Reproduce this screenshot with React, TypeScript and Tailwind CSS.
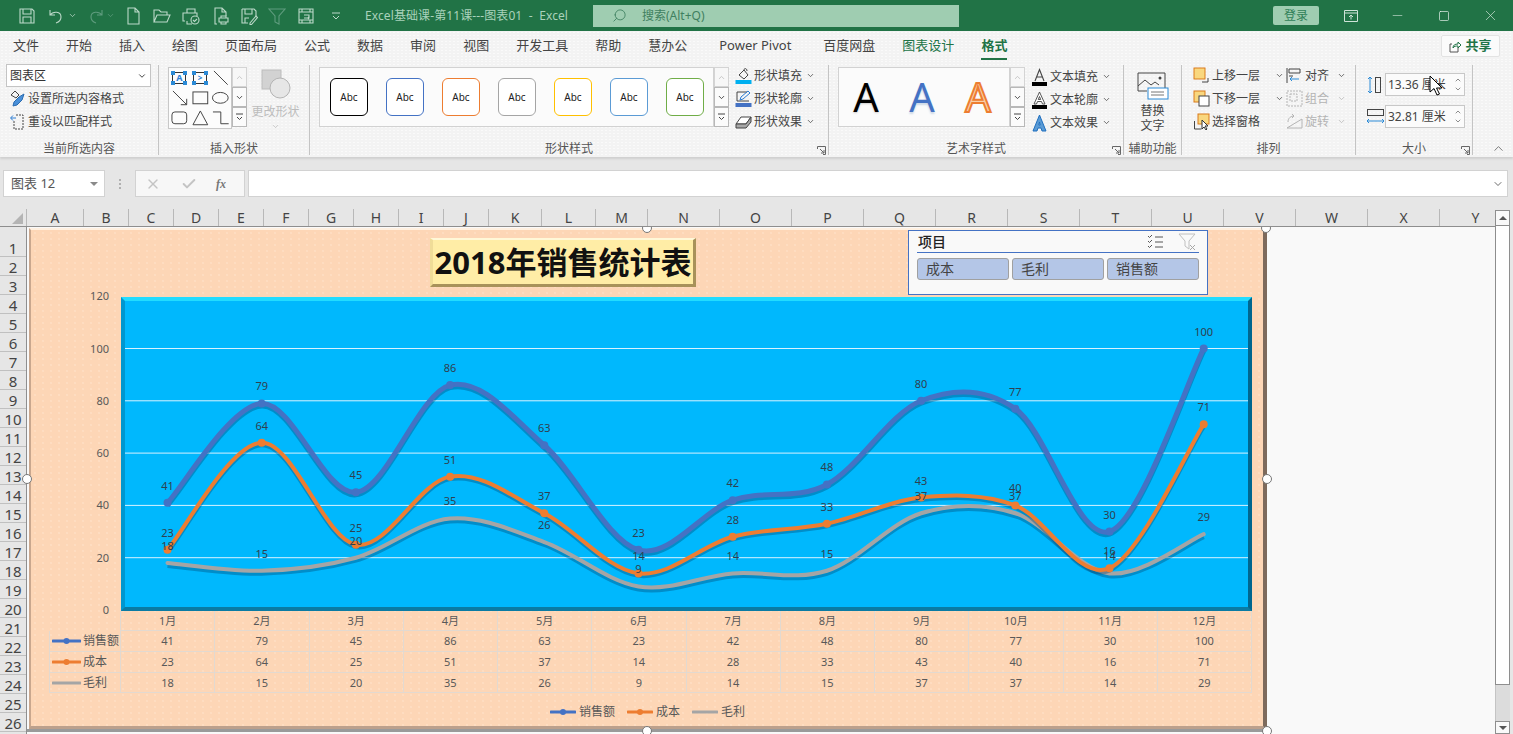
import { ChevronDown, ChevronUp, Search, Minus, Square, X, Check } from 'lucide-react';
import type { ReactNode } from 'react';

const FONT = '"Noto Sans", "Noto Sans CJK SC", sans-serif';

const months = ['1月', '2月', '3月', '4月', '5月', '6月', '7月', '8月', '9月', '10月', '11月', '12月'];
const series = [
  { name: '销售额', color: '#4472c4', values: [41, 79, 45, 86, 63, 23, 42, 48, 80, 77, 30, 100] },
  { name: '成本', color: '#ed7d31', values: [23, 64, 25, 51, 37, 14, 28, 33, 43, 40, 16, 71] },
  { name: '毛利', color: '#a5a5a5', values: [18, 15, 20, 35, 26, 9, 14, 15, 37, 37, 14, 29] },
];
const columns: [string, number][] = [
  ['A', 57], ['B', 45], ['C', 45], ['D', 45], ['E', 45], ['F', 45], ['G', 45], ['H', 45], ['I', 45], ['J', 45],
  ['K', 53], ['L', 54], ['M', 52], ['N', 72], ['O', 72], ['P', 72], ['Q', 72], ['R', 72], ['S', 72], ['T', 72],
  ['U', 72], ['V', 72], ['W', 72], ['X', 72], ['Y', 72],
];
const tabs = ['文件', '开始', '插入', '绘图', '页面布局', '公式', '数据', '审阅', '视图', '开发工具', '帮助', '慧办公', 'Power Pivot', '百度网盘', '图表设计', '格式'];
const abcColors = ['border-[#000000]', 'border-[#4472c4]', 'border-[#ed7d31]', 'border-[#a5a5a5]', 'border-[#ffc000]', 'border-[#5b9bd5]', 'border-[#70ad47]'];

// chart maths, in page coordinates
const xAt = (i: number) => 167.5 + i * 94.2;
const yAt = (v: number) => 610 - v * 2.615;

function smoothPath(values: number[]) {
  const pts = values.map((v, i) => [xAt(i), yAt(v)]);
  let d = `M${pts[0][0]} ${pts[0][1]}`;
  for (let i = 0; i < pts.length - 1; i++) {
    const p0 = pts[Math.max(i - 1, 0)];
    const p1 = pts[i];
    const p2 = pts[i + 1];
    const p3 = pts[Math.min(i + 2, pts.length - 1)];
    const c1x = p1[0] + (p2[0] - p0[0]) / 6;
    const c1y = p1[1] + (p2[1] - p0[1]) / 6;
    const c2x = p2[0] - (p3[0] - p1[0]) / 6;
    const c2y = p2[1] - (p3[1] - p1[1]) / 6;
    d += ` C${c1x} ${c1y} ${c2x} ${c2y} ${p2[0]} ${p2[1]}`;
  }
  return d;
}

function Qat({ children, w = 18, dim = false }: { children: ReactNode; w?: number; dim?: boolean }) {
  return (
    <svg width={w} height={18} viewBox="0 0 18 18" fill="none" stroke={dim ? '#5f9c7e' : '#bcd9c9'} strokeWidth="1.1">
      {children}
    </svg>
  );
}

function TitleBar() {
  return (
    <div className="h-[31px] bg-[#217346] flex items-center shrink-0 text-[12px]">
      <div className="w-[18px]" />
      <div className="flex items-center w-[347px]">
        <Qat><path d="M2 2h12l2 2v12H2zM5 2v5h8V2M5 16v-6h8v6" /></Qat>
        <div className="w-[11px]" />
        <Qat><path d="M3 3v5h5M3 8c3-4 11-4 11 2 0 3-2 5-5 6" /></Qat>
        <ChevronDown size={9} className="text-[#bcd9c9] ml-[3px]" />
        <div className="w-[10px]" />
        <Qat dim><path d="M15 3v5h-5M15 8c-3-4-11-4-11 2 0 3 2 5 5 6" /></Qat>
        <ChevronDown size={9} className="text-[#5f9c7e] ml-[1px]" />
        <div className="w-[9px]" />
        <Qat><path d="M4 1h7l4 4v12H4zM11 1v4h4" /></Qat>
        <div className="w-[11px]" />
        <Qat><path d="M1 15V3h5l2 2h6v3M1 15l3-7h13l-3 7z" /></Qat>
        <div className="w-[11px]" />
        <Qat><path d="M5 6V2h8v4M3 14H1V6h14v3M5 14v3h5" /><circle cx="13" cy="13" r="4" /><path d="M11 13l1.5 1.5 2.5-2.5" /></Qat>
        <div className="w-[12px]" />
        <Qat><path d="M5 17H3V1h7l4 4v4M10 1v4h4" /><path d="M7 11h9v4H7zM9 11V9h5v2M9 15v2h5v-2" /></Qat>
        <div className="w-[10px]" />
        <Qat><path d="M2 2h12l2 2v5M5 2v5h7V2M2 2v14h6M5 16v-5h4" /><path d="M10 16l6-7 1.5 1.5-6 7H10z" /></Qat>
        <div className="w-[10px]" />
        <Qat dim><path d="M1 2h16l-6 7v8l-4-2V9z" /></Qat>
        <div className="w-[11px]" />
        <Qat><path d="M2 2h14v14H2zM2 5h14M2 13h14M5 2v3M13 2v3M5 13v3M13 13v3M7 8h5v3M7 11h5M11 10l1 1-1 1" /></Qat>
        <div className="w-[16px]" />
        <svg width="10" height="8" viewBox="0 0 10 8" fill="none" stroke="#bcd9c9"><path d="M1 1h8M2 4l3 3 3-3" /></svg>
      </div>
      <div className="w-[228px] text-[#a9d2bb] whitespace-pre tracking-[0.1px]">Excel基础课-第11课---图表01  -  Excel</div>
      <div className="w-[366px] h-[22px] bg-[#9fcdb1] flex items-center text-[#3f8060]">
        <Search size={15} className="ml-[19px] -scale-x-100" strokeWidth={1.4} />
        <span className="ml-[15px]">搜索(Alt+Q)</span>
      </div>
      <div className="ml-[314px] w-[46px] h-[19px] bg-[#9fcdb1] rounded-[2px] flex items-center justify-center text-[#2f7f58]">登录</div>
      <div className="ml-[23px] w-[18px] flex justify-center">
        <svg width="14" height="12" viewBox="0 0 14 12" fill="none" stroke="#cfe3d8"><path d="M.5.5h13v11H.5zM.5 3h13M7 9.500V5M5 7l2-2 2 2" /></svg>
      </div>
      <Minus size={15} className="ml-[30px] text-[#cfe3d8]" strokeWidth={1} />
      <Square size={12} className="ml-[33px] text-[#e4efe9]" strokeWidth={1.4} />
      <X size={17} className="ml-[32px] text-[#cfe3d8]" strokeWidth={1} />
    </div>
  );
}

function TabRow() {
  return (
    <div className="h-[29px] bg-[#f3f3f3] bg-[radial-gradient(#fafafa_0.7px,transparent_0.8px)] bg-[length:4px_3px] flex items-start shrink-0 relative text-[13px] text-[#444444] pl-[13px] pt-[5px] gap-[27px]">
      {tabs.map((t) => {
        const active = t === '格式';
        return (
          <div key={t} className={`leading-[18px] h-[24px] whitespace-nowrap ${active ? 'font-bold text-[#217346] border-b-[2px] border-[#217346]' : t === '图表设计' ? 'text-[#217346]' : t === 'Power Pivot' ? 'px-[5px]' : ''}`}>
            {t}
          </div>
        );
      })}
      <div className="absolute left-[1441px] top-[4px] w-[59px] h-[22px] bg-[#fbfbfb] border border-[#e3e3e3] rounded-[2px] flex items-center justify-center gap-[4px] text-[#217346] font-bold">
        <svg width="12" height="13" viewBox="0 0 12 13" fill="none" stroke="#555555"><path d="M9 7.500V12H1V4h2" /><path d="M4 8c0-3 2-4 5-4V2l3 3-3 3V6C7 6 5 6 4 8z" stroke="#217346" /></svg>
        共享
      </div>
    </div>
  );
}

function Group({ w, label, launcher, children }: { w: number; label: string; launcher?: boolean; children: ReactNode }) {
  return (
    <div className="h-[90px] mt-[5px] border-r border-[#c4c4c4] flex flex-col shrink-0 relative" style={{ width: w }}>
      <div className="h-[76px] flex">{children}</div>
      <div className="h-[14px] leading-[15px] text-center text-[12px] text-[#555555]">{label}</div>
      {launcher && (
        <svg width="9" height="9" viewBox="0 0 9 9" fill="none" stroke="#666666" className="absolute right-[2px] bottom-0">
          <path d="M.5 3V.5h8v8H6M3 3l4 4M7 4v3H4" />
        </svg>
      )}
    </div>
  );
}

function ScrollButtons({ h = 20 }: { h?: number }) {
  return (
    <div className="w-[15px] flex flex-col">
      <div className="border border-[#d4d4d4] bg-[#f7f7f7] flex items-center justify-center" style={{ height: h }}>
        <ChevronUp size={9} className="text-[#c4c4c4]" strokeWidth={2.5} />
      </div>
      <div className="border border-[#b8b8b8] bg-[#fbfbfb] flex items-center justify-center" style={{ height: h }}>
        <ChevronDown size={9} className="text-[#444444]" strokeWidth={2.5} />
      </div>
      <div className="border border-[#b8b8b8] bg-[#fbfbfb] flex items-center justify-center" style={{ height: h }}>
        <svg width="9" height="8" viewBox="0 0 9 8" fill="none" stroke="#444444"><path d="M1 1h7M2 4l2.500 2.500L7 4" /></svg>
      </div>
    </div>
  );
}

function Cmd({ icon, label, chevron = true, gray = false, w }: { icon: ReactNode; label: string; chevron?: boolean; gray?: boolean; w: number }) {
  return (
    <div className={`h-[23px] flex items-center text-[12px] ${gray ? 'text-[#b4b4b4]' : 'text-[#444444]'}`} style={{ width: w }}>
      <span className="w-[19px] h-[18px] flex items-center shrink-0">{icon}</span>
      <span className="whitespace-nowrap">{label}</span>
      {chevron && <ChevronDown size={9} strokeWidth={2} className={`ml-auto ${gray ? 'text-[#b4b4b4]' : 'text-[#444444]'}`} />}
    </div>
  );
}

function Handle({ x }: { x: string }) {
  return <span className={`absolute w-[4px] h-[4px] bg-[#2b8ad6] ${x}`} />;
}

function ShapeThumbs() {
  const s = { fill: 'none', stroke: '#444444', strokeWidth: 1 };
  return (
    <div className="w-[64px] bg-[#fcfcfc] border border-[#c8c8c8] grid grid-cols-3 grid-rows-3">
      <div className="flex items-center justify-center">
        <div className="relative w-[14px] h-[12px] border border-[#333333] text-[9px] leading-[10px] font-bold text-center text-[#2b7cd3]">A
          <Handle x="-left-[2px] -top-[2px]" /><Handle x="-right-[2px] -top-[2px]" /><Handle x="-left-[2px] -bottom-[2px]" /><Handle x="-right-[2px] -bottom-[2px]" />
        </div>
      </div>
      <div className="flex items-center justify-center">
        <div className="relative w-[14px] h-[12px] border border-[#333333] text-[8px] leading-[10px] font-bold text-center text-[#2b7cd3]">&gt;
          <Handle x="-left-[2px] -top-[2px]" /><Handle x="-right-[2px] -top-[2px]" /><Handle x="-left-[2px] -bottom-[2px]" /><Handle x="-right-[2px] -bottom-[2px]" />
        </div>
      </div>
      <svg viewBox="0 0 21 20" {...s}><path d="M4 3l14 14" /></svg>
      <svg viewBox="0 0 21 20" {...s}><path d="M4 3l14 14M18 11v6h-6" /></svg>
      <svg viewBox="0 0 21 20" {...s}><rect x="3" y="4" width="15" height="12" /></svg>
      <svg viewBox="0 0 21 20" {...s}><ellipse cx="10.500" cy="10" rx="8" ry="5.500" /></svg>
      <svg viewBox="0 0 21 20" {...s}><rect x="3" y="4" width="15" height="12" rx="3" /></svg>
      <svg viewBox="0 0 21 20" {...s}><path d="M10.500 3L18 17H3z" /></svg>
      <svg viewBox="0 0 21 20" {...s}><path d="M3 4h8v12h8" /></svg>
    </div>
  );
}

// the three "text" commands: thin A, double outlined A, fat blue A
function TextA({ kind }: { kind: 'fill' | 'outline' | 'effect' }) {
  return (
    <svg width="17" height="18" viewBox="0 0 17 18" fill="none">
      {kind === 'fill' && <path d="M4 13L8.500 1.500 13 13M5.500 9h6" stroke="#444444" strokeWidth="1.1" />}
      {kind === 'outline' && (
        <path d="M8.500 1L3 13h2.500l1-2.500h4l1 2.500H14z M7.300 8.500L8.500 5.500 9.700 8.500z" fill="#ffffff" stroke="#444444" fillRule="evenodd" strokeWidth="0.9" />
      )}
      {kind === 'effect' && (
        <path d="M8.500 1L2 17h4l1-3h3l1 3h4z M7.800 11L8.500 8 9.200 11z" fill="#5b9bd5" stroke="#1f6fbf" fillRule="evenodd" strokeWidth="1" />
      )}
      {kind !== 'effect' && <rect x="1" y="14" width="15" height="4" fill="#000000" />}
    </svg>
  );
}

function Ribbon() {
  return (
    <div className="h-[97px] bg-[#f3f3f3] bg-[radial-gradient(#fafafa_0.7px,transparent_0.8px)] bg-[length:4px_3px] flex shrink-0 relative shadow-[0_2px_2px_#cfcfcf] z-10" style={{ fontFamily: FONT }}>
      <Group w={159} label="当前所选内容">
        <div className="pl-[6px] -mt-[1px]">
          <div className="w-[145px] h-[23px] bg-white border border-[#c4c4c4] flex items-center px-[3px] text-[12px] text-[#333333]">
            图表区
            <ChevronDown size={10} className="ml-auto text-[#333333]" strokeWidth={2.2} />
          </div>
          <div className="h-[23px] flex items-center pl-[3px] text-[12px] text-[#444444]">
            <svg width="17" height="17" viewBox="0 0 17 17" fill="none" stroke="#444444" className="mr-[2px]">
              <path d="M2 5l4-4 4 4-3 3z" /><path d="M10 7l5-3-2 6-5 5-4 1 1-4z" fill="#4a90d9" stroke="#2b6cb0" />
            </svg>
            设置所选内容格式
          </div>
          <div className="h-[23px] flex items-center pl-[3px] text-[12px] text-[#444444]">
            <svg width="17" height="17" viewBox="0 0 17 17" fill="none" stroke="#444444" className="mr-[2px]">
              <path d="M7 2h7v14H5V8" strokeDasharray="2 1" /><path d="M2 5h5M4 2.500L1.500 5 4 7.500" stroke="#2b7cd3" />
            </svg>
            重设以匹配样式
          </div>
        </div>
      </Group>

      <Group w={151} label="插入形状">
        <div className="pl-[9px] pt-[2px] flex">
          <div className="flex h-[62px]">
            <ShapeThumbs />
            <ScrollButtons h={20} />
          </div>
          <div className="w-[57px] flex flex-col items-center text-[12px] text-[#bcbcbc]">
            <svg width="30" height="34" viewBox="0 0 30 34" className="mt-[2px]">
              <rect x="1" y="1" width="19" height="19" fill="#d2d2d2" stroke="#bcbcbc" />
              <circle cx="19" cy="19" r="10" fill="#e6e6e6" stroke="#b4b4b4" />
            </svg>
            <span className="leading-[16px] mt-[1px] whitespace-nowrap">更改形状</span>
            <ChevronDown size={9} className="mt-[2px] text-[#bcbcbc]" />
          </div>
        </div>
      </Group>

      <Group w={519} label="形状样式" launcher>
        <div className="pl-[9px] pt-[2px] flex">
          <div className="w-[395px] h-[60px] bg-[#fbfbfb] border border-[#d2d2d2] flex items-center pl-[10px] gap-[18px]">
            {abcColors.map((c) => (
              <div key={c} className={`w-[38px] h-[38px] rounded-[6px] border-[1px] bg-white flex items-center justify-center text-[10px] text-[#222222] ${c}`}>Abc</div>
            ))}
          </div>
          <ScrollButtons h={20} />
          <div className="ml-[6px] -mt-[3px]">
            <Cmd w={80} label="形状填充" icon={
              <svg width="17" height="18" viewBox="0 0 17 18" fill="none" stroke="#444444"><path d="M4 8l5-5 4 5-4 4z" /><path d="M9 3c0-2 3-2 3 1" /><rect x="0.500" y="13" width="16" height="4" fill="#00b0f0" stroke="none" /></svg>
            } />
            <Cmd w={80} label="形状轮廓" icon={
              <svg width="17" height="18" viewBox="0 0 17 18" fill="none" stroke="#444444"><path d="M14 11H2V2h10" /><path d="M5 10l1-3 7-6 2 2-7 6z" stroke="#2b7cd3" /><rect x="0.500" y="13" width="16" height="4" fill="#4472c4" stroke="none" /></svg>
            } />
            <Cmd w={80} label="形状效果" icon={
              <svg width="17" height="16" viewBox="0 0 17 16" stroke="#444444"><path d="M1 10l5-7h10l-5 7z" fill="#ffffff" /><path d="M1 10v4h10l5-6V3l-5 7z" fill="#a8a8a8" /></svg>
            } />
          </div>
        </div>
      </Group>

      <Group w={295} label="艺术字样式" launcher>
        <div className="pl-[9px] pt-[2px] flex">
          <div className="w-[172px] h-[60px] bg-[#fbfbfb] border border-[#d2d2d2] flex items-center text-[40px] leading-none text-center">
            <span className="w-[56px] -ml-[1px] text-black [text-shadow:0_1px_2px_#cccccc]">A</span>
            <span className="w-[56px] text-[#4472c4] [text-shadow:0_2px_2px_#ccd8e6]">A</span>
            <span className="w-[56px] text-[#f9cfa8] [-webkit-text-stroke:2px_#ed7d31]">A</span>
          </div>
          <ScrollButtons h={20} />
          <div className="ml-[6px] -mt-[2px]">
            <Cmd w={80} label="文本填充" icon={<TextA kind="fill" />} />
            <Cmd w={80} label="文本轮廓" icon={<TextA kind="outline" />} />
            <Cmd w={80} label="文本效果" icon={<TextA kind="effect" />} />
          </div>
        </div>
      </Group>

      <Group w={58} label="辅助功能">
        <div className="w-full flex flex-col items-center text-[12px] leading-[15px] text-[#444444]">
          <svg width="32" height="28" viewBox="0 0 32 28" fill="none" className="mt-[7px]">
            <path d="M10 19H1V1h27v15" stroke="#444444" />
            <path d="M1 14l7-6 6 5 4-3 4 3" stroke="#444444" />
            <circle cx="23" cy="6" r="1.500" fill="#444444" />
            <rect x="11" y="16" width="20" height="11" fill="#ffffff" stroke="#2b8ad6" />
            <path d="M14 20h13M14 23h13" stroke="#777777" />
          </svg>
          <span className="mt-[3px]">替换</span>
          <span>文字</span>
        </div>
      </Group>

      <Group w={174} label="排列">
        <div className="pl-[11px] flex -mt-px">
          <div>
            <Cmd w={91} label="上移一层" icon={
              <svg width="17" height="17" viewBox="0 0 17 17" fill="none"><path d="M15 11V15H9" stroke="#444444" /><rect x="1" y="1" width="11" height="11" fill="#f9d77e" stroke="#d97a1a" /></svg>
            } />
            <Cmd w={91} label="下移一层" icon={
              <svg width="17" height="17" viewBox="0 0 17 17" fill="none"><rect x="1" y="1" width="11" height="11" fill="#f9d77e" stroke="#d97a1a" /><rect x="6" y="6" width="10" height="10" fill="#ffffff" stroke="#444444" /></svg>
            } />
            <Cmd w={91} chevron={false} label="选择窗格" icon={
              <svg width="17" height="17" viewBox="0 0 17 17" fill="none"><rect x="5" y="1" width="11" height="10" fill="#f9d77e" stroke="#d97a1a" /><path d="M1.500 8v8h7" stroke="#444444" /><path d="M9 7l0 9 2-2 2 3 1-1-2-3h3z" fill="#ffffff" stroke="#333333" /></svg>
            } />
          </div>
          <div className="ml-[2px]">
            <Cmd w={60} label="对齐" icon={
              <svg width="17" height="17" viewBox="0 0 17 17" fill="none" stroke="#444444"><path d="M1 1v15M3 2h11v4H3zM3 9h4" /><path d="M13 12H4M6 10l-2 2 2 2" stroke="#2b8ad6" /></svg>
            } />
            <Cmd w={60} gray label="组合" icon={
              <svg width="17" height="17" viewBox="0 0 17 17" fill="none" stroke="#b4b4b4" strokeDasharray="2 1"><path d="M1 1h15v15H1zM4 4h7v7H4z" /></svg>
            } />
            <Cmd w={60} gray label="旋转" icon={
              <svg width="17" height="17" viewBox="0 0 17 17" fill="none" stroke="#b4b4b4"><path d="M1 15L16 6v9z" /><path d="M2 9c0-4 3-6 6-6M6 1l2 2-2 2" /></svg>
            } />
          </div>
        </div>
      </Group>

      <Group w={117} label="大小" launcher>
        <div className="pl-[10px] pt-[8px] flex flex-col gap-[9px]">
          {[['13.36 厘米', 'v'], ['32.81 厘米', 'h']].map(([v, k]) => (
            <div key={k} className="flex items-center">
              {k === 'v' ? (
                <svg width="19" height="18" viewBox="0 0 19 18" fill="none"><path d="M4 1v16M2 3l2-2 2 2M2 15l2 2 2-2" stroke="#2b8ad6" /><rect x="9.500" y="1.500" width="5" height="15" stroke="#444444" /></svg>
              ) : (
                <svg width="19" height="18" viewBox="0 0 19 18" fill="none"><rect x="1.500" y="1.500" width="16" height="6" stroke="#444444" /><path d="M1 13h17M3 11l-2 2 2 2M16 11l2 2-2 2" stroke="#2b8ad6" /></svg>
              )}
              <div className="w-[80px] h-[23px] bg-[#fbfbfb] border border-[#c8c8c8] flex items-center pl-[2px] text-[12px] text-[#444444] whitespace-nowrap">
                {v}
                <div className="ml-auto mr-[2px] flex flex-col text-[#555555]">
                  <ChevronUp size={8} strokeWidth={2} />
                  <ChevronDown size={8} strokeWidth={2} className="mt-[1px]" />
                </div>
              </div>
            </div>
          ))}
        </div>
      </Group>

      <div className="flex-1 flex items-end justify-end pr-[7px] pb-[1px]">
        <ChevronUp size={15} className="text-[#555555]" strokeWidth={1.2} />
      </div>
    </div>
  );
}

function FormulaBar() {
  return (
    <div className="h-[52px] shrink-0 bg-[#e6e6e6] flex items-start pt-[13px] pl-[3px] pr-[5px]">
      <div className="w-[102px] h-[27px] bg-white border border-[#d2d2d2] flex items-center pl-[7px] text-[13px] text-[#555555]">
        图表 12
        <span className="ml-auto mr-[6px] w-0 h-0 border-l-[4px] border-r-[4px] border-t-[4px] border-l-transparent border-r-transparent border-t-[#8a8a8a]" />
      </div>
      <div className="w-[30px] h-[27px] flex items-center justify-center">
        <span className="flex flex-col gap-[2px]">
          <i className="block w-[2px] h-[2px] bg-[#b0b0b0]" />
          <i className="block w-[2px] h-[2px] bg-[#b0b0b0]" />
          <i className="block w-[2px] h-[2px] bg-[#b0b0b0]" />
        </span>
      </div>
      <div className="w-[110px] h-[27px] bg-[#f7f7f7] border border-[#d2d2d2] flex items-center pl-[9px]">
        <X size={16} className="text-[#c4c4c4]" strokeWidth={2} />
        <Check size={16} className="ml-[20px] text-[#c4c4c4]" strokeWidth={3} />
        <span className="ml-[19px] text-[12px] italic font-bold text-[#777777]" style={{ fontFamily: '"Liberation Serif", serif' }}>fx</span>
      </div>
      <div className="ml-[3px] flex-1 h-[27px] bg-white border border-[#d2d2d2] flex items-center justify-end pr-[3px]">
        <ChevronDown size={12} className="text-[#444444]" strokeWidth={1.6} />
      </div>
    </div>
  );
}

function ColumnHeader() {
  return (
    <div className="h-[18px] flex bg-[#e6e6e6] overflow-hidden shrink-0 border-b border-[#8e8e8e]">
      <div className="w-[27px] shrink-0 border-r border-[#b8b8b8] flex items-end justify-end pr-[3px] pb-[2px]">
        <span className="w-0 h-0 border-b-[11px] border-l-[11px] border-b-[#b4b4b4] border-l-transparent" />
      </div>
      {columns.map(([c, w]) => (
        <div key={c} className="shrink-0 border-r border-[#b8b8b8] text-center text-[14px] leading-[17px] text-[#444444]" style={{ width: w }}>{c}</div>
      ))}
    </div>
  );
}

function RowHeader() {
  return (
    <div className="w-[27px] shrink-0 flex flex-col bg-[#e6e6e6] border-r border-[#8e8e8e]">
      {Array.from({ length: 26 }, (_, i) => (
        <div key={i} className={`shrink-0 border-b border-[#c0c0c0] flex items-end justify-center text-[15px] leading-[15px] text-[#444444] ${i === 0 ? 'h-[30px]' : 'h-[19px]'}`}>
          {i + 1}
        </div>
      ))}
    </div>
  );
}

function Slicer() {
  return (
    <div className="absolute left-[877px] top-0 w-[300px] h-[65px] bg-[#f9f9f9] border border-[#4472c4] px-[8px] text-[14px]">
      <div className="h-[22px] flex items-center border-b border-[#4472c4] font-medium text-[#222222] pl-px">
        项目
        <svg width="17" height="15" viewBox="0 0 17 15" fill="none" stroke="#555555" className="ml-auto mr-[14px]">
          <path d="M1 2l1.500 1.500L5 1M1 7l1.500 1.500L5 6M1 12l1.500 1.500L5 11M8 3h8M8 8h8M8 13h8" />
        </svg>
        <svg width="18" height="18" viewBox="0 0 18 18" fill="none" stroke="#c0c0c0" className="mr-[3px]">
          <path d="M1 1h16l-6 7v8l-4-3V8z" /><path d="M12 12l5 5M17 12l-5 5" stroke="#a8a8a8" />
        </svg>
      </div>
      <div className="flex gap-[3px] mt-[5px]">
        {['成本', '毛利', '销售额'].map((t) => (
          <div key={t} className="flex-1 h-[22px] bg-[#b4c6e7] border border-[#a0a0a0] rounded-[3px] pl-[8px] leading-[19px] text-[#444444]">{t}</div>
        ))}
      </div>
    </div>
  );
}

function DataTable() {
  return (
    <div className="absolute left-[18px] top-[381px] w-[1203px] grid grid-cols-[72px_repeat(12,1fr)] grid-rows-[20px_21px_21px_20px] text-[11px] text-[#595959] leading-[20px] text-center">
      <div className="border-r border-[#e2d9d0]" />
      {months.map((m) => <div key={m} className="border-r border-b border-[#e2d9d0]">{m}</div>)}
      {series.map((s) => (
        <div key={s.name} className="contents">
          <div className="border-l border-r border-b border-t-0 border-[#e2d9d0] flex items-center pl-[2px] text-[12px]">
            <svg width="29" height="8" viewBox="0 0 29 8" className="mr-[2px] shrink-0">
              <line x1="1" y1="4" x2="28" y2="4" stroke={s.color} strokeWidth="3" strokeLinecap="round" />
              {s.name !== '毛利' && <circle cx="14.500" cy="4" r="3" fill={s.color} />}
            </svg>
            <span className="whitespace-nowrap">{s.name}</span>
          </div>
          {s.values.map((v, i) => <div key={i} className="border-r border-b border-[#e2d9d0]">{v}</div>)}
        </div>
      ))}
    </div>
  );
}

function Legend() {
  return (
    <div className="absolute left-[519px] top-[474px] flex gap-[12px] text-[12px] leading-[16px] text-[#595959]">
      {series.map((s) => (
        <div key={s.name} className="flex items-center gap-[3px]">
          <svg width="26" height="8" viewBox="0 0 26 8">
            <line x1="1" y1="4" x2="25" y2="4" stroke={s.color} strokeWidth="3" strokeLinecap="round" />
            {s.name !== '毛利' && <circle cx="13" cy="4" r="3" fill={s.color} />}
          </svg>
          {s.name}
        </div>
      ))}
    </div>
  );
}

function Chart() {
  const order = [series[2], series[1], series[0]];
  return (
    <div className="absolute left-[2px] top-[1px] w-[1238px] h-[501px] bg-[#fdd6b6] bg-[radial-gradient(#ffe8d6_0.7px,transparent_0.9px)] bg-[length:8px_6px] border-t-[2px] border-t-[#fff0e0] border-l-[2px] border-l-[#c9a78e] border-r-[4px] border-r-[#7d6a5c] border-b-[3px] border-b-[#bca08c]">
      {/* plot area */}
      <div className="absolute left-[90px] top-[67px] w-[1131px] h-[314px] bg-[#00b8fd] bg-[radial-gradient(#1cc2fd_0.6px,transparent_0.8px)] bg-[length:8px_6px] border-t-[4px] border-t-[#22dcff] border-l-[4px] border-l-[#0097cf] border-r-[4px] border-r-[#00668f] border-b-[4px] border-b-[#0a7ba3]" />
      <svg className="absolute left-0 top-0" width="1232" height="496" viewBox="31 230 1232 496" style={{ fontFamily: FONT }}>
        {[20, 40, 60, 80, 100].map((v) => (
          <line key={v} x1="125" x2="1248" y1={yAt(v)} y2={yAt(v)} stroke="#d8f2ff" strokeWidth="1" />
        ))}
        {[0, 20, 40, 60, 80, 100, 120].map((v) => (
          <text key={v} x="109" y={yAt(v) + 4} textAnchor="end" fontSize="11" fill="#595959">{v}</text>
        ))}
        {order.map((s) => (
          <g key={s.name}>
            <path d={smoothPath(s.values)} fill="none" stroke="#003c66" strokeOpacity="0.35" strokeWidth={s.name === '成本' ? 4 : 5} transform="translate(0 2.5)" />
            <path d={smoothPath(s.values)} fill="none" stroke={s.color} strokeWidth={s.name === '销售额' ? 5 : 4} strokeLinecap="round" />
            {s.name !== '毛利' && s.values.map((v, i) => (
              <circle key={i} cx={xAt(i)} cy={yAt(v)} r="4" fill={s.color} />
            ))}
          </g>
        ))}
        {series.map((s) => s.values.map((v, i) => (
          <text key={s.name + i} x={xAt(i)} y={yAt(v) - 13} textAnchor="middle" fontSize="11" fill="#2f4050">{v}</text>
        )))}
      </svg>
      {/* title */}
      <div className="absolute left-[399px] top-[8px] w-[266px] h-[49px] bg-[#ffeda6] border-t-[2px] border-t-[#fff8d8] border-l-[3px] border-l-[#f0dc98] border-r-[3px] border-r-[#a8925a] border-b-[3px] border-b-[#a8925a] flex items-center justify-center text-[31px] font-bold text-[#111111] whitespace-nowrap">
        2018年销售统计表
      </div>
      <Slicer />
      <DataTable />
      <Legend />
    </div>
  );
}

function SelectionHandle({ className }: { className: string }) {
  return <span className={`absolute w-[10px] h-[10px] rounded-full bg-white border border-[#777777] ${className}`} />;
}

function ScrollBar() {
  return (
    <div className="w-[18px] shrink-0 bg-[#e6e6e6] pt-px pr-[3px] flex flex-col">
      <div className="h-[16px] bg-[#f9f9f9] border border-[#8e8e8e] flex items-center justify-center shrink-0">
        <span className="w-0 h-0 border-l-[4px] border-r-[4px] border-b-[4px] border-l-transparent border-r-transparent border-b-[#555555]" />
      </div>
      <div className="h-[459px] bg-white border border-t-0 border-[#8e8e8e] shrink-0" />
      <div className="flex-1 bg-[#dcdcdc] border-l border-[#c4c4c4]" />
      <div className="h-[13px] bg-[#f9f9f9] border border-[#8e8e8e] flex items-center justify-center shrink-0">
        <span className="w-0 h-0 border-l-[4px] border-r-[4px] border-t-[4px] border-l-transparent border-r-transparent border-t-[#555555]" />
      </div>
    </div>
  );
}

export default function App() {
  return (
    <div className="w-[1513px] h-[734px] overflow-hidden flex flex-col bg-[#e6e6e6] relative" style={{ fontFamily: FONT }}>
      <TitleBar />
      <TabRow />
      <Ribbon />
      <FormulaBar />
      <div className="flex-1 flex min-h-0">
        <div className="flex-1 min-w-0 flex flex-col">
          <ColumnHeader />
          <div className="flex-1 flex min-h-0 overflow-hidden">
            <RowHeader />
            <div className="flex-1 relative bg-[#f9f9f9]">
              <div className="absolute left-0 top-[502px] w-[1238px] h-[3px] bg-[#9a9a9a]" />
              <Chart />
              <SelectionHandle className="left-[615px] -top-[4px]" />
              <SelectionHandle className="left-[1234px] -top-[4px]" />
              <SelectionHandle className="-left-[5px] top-[247px]" />
              <SelectionHandle className="left-[1235px] top-[247px]" />
              <SelectionHandle className="left-[615px] top-[499px]" />
              <SelectionHandle className="left-[1235px] top-[499px]" />
            </div>
          </div>
        </div>
        <ScrollBar />
      </div>
      {/* mouse pointer */}
      <svg width="16" height="22" viewBox="0 0 16 22" className="absolute left-[1429px] top-[75px] z-20">
        <path d="M1 1v16l4-3.500L8 20l2.500-1-3-6H13z" fill="#ffffff" stroke="#000000" strokeWidth="1" />
      </svg>
    </div>
  );
}
